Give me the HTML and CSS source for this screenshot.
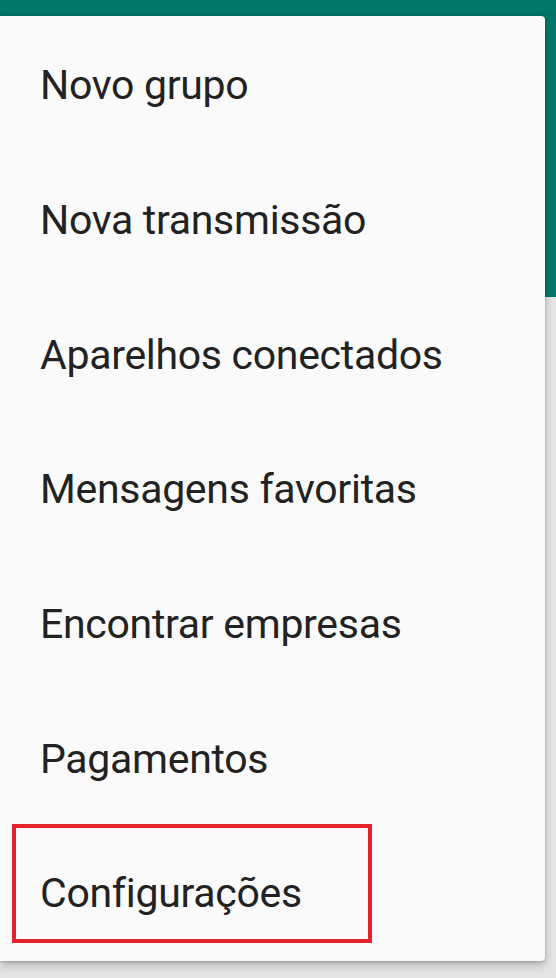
FILE: index.html
```html
<!DOCTYPE html>
<html lang="pt">
<head>
<meta charset="utf-8">
<link rel="stylesheet" href="styles.css">
</head>
<body>
<div class="screen">
  <div class="appbar"></div>
  <div class="menu">
    <div class="item">Novo grupo</div>
    <div class="item">Nova transmissão</div>
    <div class="item">Aparelhos conectados</div>
    <div class="item">Mensagens favoritas</div>
    <div class="item">Encontrar empresas</div>
    <div class="item">Pagamentos</div>
    <div class="item item-marked">Configurações<span class="highlight"></span></div>
  </div>
</div>
</body>
</html>
```

FILE: styles.css
```css
html, body {
  margin: 0;
  padding: 0;
}
body {
  width: 556px;
  height: 978px;
  overflow: hidden;
  background: #e4e4e4;
  font-family: Roboto, "Noto Sans", sans-serif;
}
.screen {
  position: relative;
  width: 556px;
  height: 978px;
}
.appbar {
  height: 297px;
  background: linear-gradient(#00796a 0, #00796a 10px, #017064 16px, #00796a 17px);
}
.menu {
  position: absolute;
  left: 0;
  top: 16px;
  width: 545px;
  height: 945px;
  box-sizing: border-box;
  padding-top: 2px;
  background: #fafafa;
  border-radius: 0 4px 4px 0;
  box-shadow: 0 4px 10px rgba(0,0,0,0.22), 0 1px 3px rgba(0,0,0,0.18);
  display: flex;
  flex-direction: column;
}
.item {
  position: relative;
  height: 134.7px;
  display: flex;
  align-items: center;
  padding-left: 40px;
  font-size: 41px;
  color: #222222;
  letter-spacing: -0.3px;
}
.highlight {
  position: absolute;
  left: 12px;
  top: -2px;
  width: 360px;
  height: 119px;
  box-sizing: border-box;
  border: 4.5px solid #e3222b;
}
```
